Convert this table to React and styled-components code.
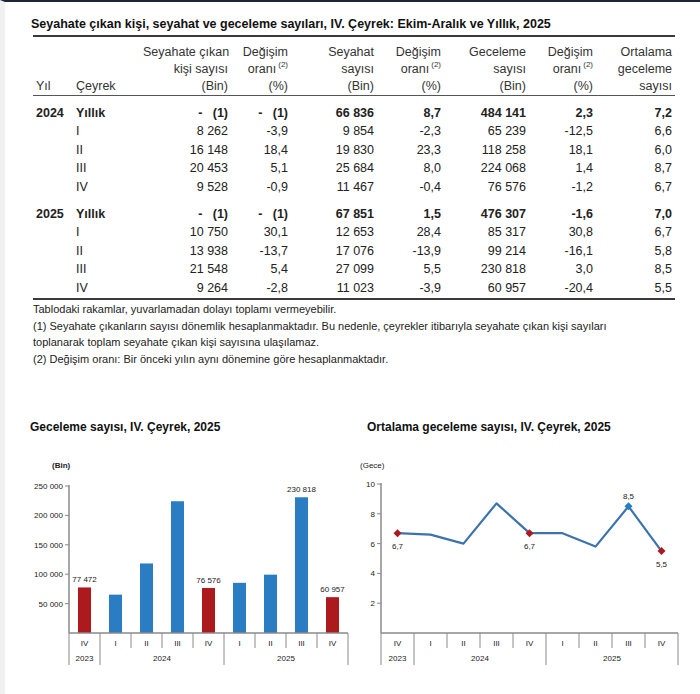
import React from 'react';
import styled, { createGlobalStyle } from 'styled-components';

const GlobalStyle = createGlobalStyle`
  html, body {
    margin: 0;
    padding: 0;
    background: #ffffff;
  }
  body {
    font-family: "Liberation Sans", Arial, sans-serif;
    color: #222;
  }
`;

const Page = styled.div`
  box-sizing: border-box;
  min-height: 694px;
  border-top: 2px solid #1e2536;
  border-left: 5px solid #f1f1f1;
  background: #fff;
`;

const Title = styled.h2`
  margin: 14px 0 0 26px;
  font-size: 12.5px;
  line-height: 16px;
  font-weight: bold;
  color: #111;
  white-space: nowrap;
`;

const Table = styled.table`
  margin: 3px 0 0 28px;
  width: 642px;
  table-layout: fixed;
  border-collapse: collapse;
  font-size: 12.5px;
`;

const HeadCell = styled.th`
  font-weight: normal;
  color: #333;
  text-align: ${(p) => p.$align || 'right'};
  vertical-align: bottom;
  line-height: 17px;
  padding: 7px 3px 0 3px;
  border-top: 2px solid #3a3a3a;
  border-bottom: 1px solid #555;
  white-space: nowrap;
`;

const Sup = styled.sup`
  font-size: 8px;
  line-height: 0;
  position: relative;
  top: -1px;
  margin-left: 2px;
`;

const Cell = styled.td`
  text-align: ${(p) => p.$align || 'right'};
  font-weight: ${(p) => (p.$bold ? 'bold' : 'normal')};
  color: #222;
  line-height: 18.4px;
  padding: ${(p) => p.$top}px 3px ${(p) => (p.$last ? 1 : 0)}px 3px;
  border-bottom: ${(p) => (p.$last ? '2px solid #3a3a3a' : 'none')};
  white-space: nowrap;
`;

const Notes = styled.div`
  margin-left: 28px;
  padding-top: 1px;
  font-size: 11px;
  line-height: 16.5px;
  color: #222;
  white-space: nowrap;
`;

const ChartsRow = styled.div`
  display: grid;
  grid-template-columns: 345px 350px;
  margin-top: 52px;
`;

const ChartPanel = styled.div`
  display: flex;
  flex-direction: column;
`;

const ChartTitle = styled.h3`
  margin: 0;
  padding-left: ${(p) => p.$indent}px;
  font-size: 12px;
  line-height: 16px;
  font-weight: bold;
  color: #111;
  white-space: nowrap;
`;

const ChartSvg = styled.svg`
  display: block;
  font-family: "Liberation Sans", Arial, sans-serif;
`;

const DASH = '-\u00a0\u00a0\u00a0(1)';

const groups = [
  {
    year: '2024',
    rows: [
      ['Yıllık', DASH, DASH, '66 836', '8,7', '484 141', '2,3', '7,2'],
      ['I', '8 262', '-3,9', '9 854', '-2,3', '65 239', '-12,5', '6,6'],
      ['II', '16 148', '18,4', '19 830', '23,3', '118 258', '18,1', '6,0'],
      ['III', '20 453', '5,1', '25 684', '8,0', '224 068', '1,4', '8,7'],
      ['IV', '9 528', '-0,9', '11 467', '-0,4', '76 576', '-1,2', '6,7'],
    ],
  },
  {
    year: '2025',
    rows: [
      ['Yıllık', DASH, DASH, '67 851', '1,5', '476 307', '-1,6', '7,0'],
      ['I', '10 750', '30,1', '12 653', '28,4', '85 317', '30,8', '6,7'],
      ['II', '13 938', '-13,7', '17 076', '-13,9', '99 214', '-16,1', '5,8'],
      ['III', '21 548', '5,4', '27 099', '5,5', '230 818', '3,0', '8,5'],
      ['IV', '9 264', '-2,8', '11 023', '-3,9', '60 957', '-20,4', '5,5'],
    ],
  },
];

const colWidths = [40, 67, 91, 60, 86, 67, 85, 67, 79];

const Change = () => (
  <>
    Değişim
    <br />
    oranı<Sup>(2)</Sup>
    <br />
    (%)
  </>
);

function DataTable() {
  return (
    <Table>
      <colgroup>
        {colWidths.map((w, i) => (
          <col key={i} style={{ width: w }} />
        ))}
      </colgroup>
      <thead>
        <tr>
          <HeadCell $align="left">Yıl</HeadCell>
          <HeadCell $align="left">Çeyrek</HeadCell>
          <HeadCell>
            Seyahate çıkan
            <br />
            kişi sayısı
            <br />
            (Bin)
          </HeadCell>
          <HeadCell>
            <Change />
          </HeadCell>
          <HeadCell>
            Seyahat
            <br />
            sayısı
            <br />
            (Bin)
          </HeadCell>
          <HeadCell>
            <Change />
          </HeadCell>
          <HeadCell>
            Geceleme
            <br />
            sayısı
            <br />
            (Bin)
          </HeadCell>
          <HeadCell>
            <Change />
          </HeadCell>
          <HeadCell>
            Ortalama
            <br />
            geceleme
            <br />
            sayısı
          </HeadCell>
        </tr>
      </thead>
      <tbody>
        {groups.map((g, gi) =>
          g.rows.map((r, ri) => {
            const bold = ri === 0;
            const top = ri === 0 ? (gi === 0 ? 8 : 9) : 0;
            const last = gi === groups.length - 1 && ri === g.rows.length - 1;
            return (
              <tr key={g.year + ri}>
                <Cell $align="left" $bold $top={top} $last={last}>
                  {ri === 0 ? g.year : ''}
                </Cell>
                {r.map((v, ci) => (
                  <Cell
                    key={ci}
                    $align={ci === 0 ? 'left' : 'right'}
                    $bold={bold}
                    $top={top}
                    $last={last}
                  >
                    {v}
                  </Cell>
                ))}
              </tr>
            );
          })
        )}
      </tbody>
    </Table>
  );
}

const ticks = ['IV', 'I', 'II', 'III', 'IV', 'I', 'II', 'III', 'IV'];
const AXIS = '#8a8a8a';
const BLUE = '#2a7cc3';
const RED = '#ad1a1e';
const LINE = '#3d73ad';
const BASE = 632;

function CategoryAxis({ x0, step }) {
  const yearBounds = [0, 1, 5, 9];
  const years = [
    { label: '2023', at: 0.5 },
    { label: '2024', at: 3 },
    { label: '2025', at: 7 },
  ];
  return (
    <g>
      <line x1={x0} y1={BASE} x2={x0 + step * 9} y2={BASE} stroke={AXIS} strokeWidth="1.5" />
      {Array.from({ length: 10 }, (_, k) => (
        <line
          key={k}
          x1={x0 + step * k}
          y1={BASE}
          x2={x0 + step * k}
          y2={yearBounds.includes(k) ? 664 : 647}
          stroke={AXIS}
          strokeWidth="1"
        />
      ))}
      {ticks.map((t, i) => (
        <text key={i} x={x0 + step * i + step / 2} y={645} fontSize="8" textAnchor="middle" fill="#222">
          {t}
        </text>
      ))}
      {years.map((y) => (
        <text key={y.label} x={x0 + step * y.at} y={660} fontSize="8" textAnchor="middle" fill="#222">
          {y.label}
        </text>
      ))}
    </g>
  );
}

const nights = [77472, 65239, 118258, 224068, 76576, 85317, 99214, 230818, 60957];
const labelled = { 0: '77 472', 4: '76 576', 7: '230 818', 8: '60 957' };

function BarChart() {
  const x0 = 69;
  const step = 31;
  const scale = 147 / 250000;
  const yTicks = [250000, 200000, 150000, 100000, 50000];
  return (
    <ChartSvg width="345" height="260" viewBox="5 434 345 260">
      <text x="52" y="467" fontSize="8" fontWeight="bold" fill="#222">(Bin)</text>
      <line x1={x0} y1={484} x2={x0} y2={BASE} stroke={AXIS} strokeWidth="1.5" />
      {yTicks.map((v) => {
        const y = BASE - v * scale;
        return (
          <g key={v}>
            <line x1={x0 - 4} y1={y} x2={x0} y2={y} stroke={AXIS} strokeWidth="1" />
            <text x={x0 - 6} y={y + 3} fontSize="8" textAnchor="end" fill="#222">
              {v.toLocaleString('fr-FR').replace(/\s/g, ' ')}
            </text>
          </g>
        );
      })}
      {nights.map((v, i) => {
        const h = v * scale;
        const cx = x0 + step * i + step / 2;
        const red = i === 0 || i === 4 || i === 8;
        return (
          <g key={i}>
            <rect x={cx - 6.5} y={BASE - h} width="13" height={h} fill={red ? RED : BLUE} />
            {labelled[i] && (
              <text x={cx} y={BASE - h - 5} fontSize="8" textAnchor="middle" fill="#222">
                {labelled[i]}
              </text>
            )}
          </g>
        );
      })}
      <CategoryAxis x0={x0} step={step} />
    </ChartSvg>
  );
}

const avg = [6.7, 6.6, 6.0, 8.7, 6.7, 6.7, 5.8, 8.5, 5.5];
const marks = {
  0: { color: RED, label: '6,7', dy: 16 },
  4: { color: RED, label: '6,7', dy: 16 },
  7: { color: BLUE, label: '8,5', dy: -7 },
  8: { color: RED, label: '5,5', dy: 16 },
};

function Diamond({ x, y, color }) {
  const r = 4;
  return <polygon points={`${x},${y - r} ${x + r},${y} ${x},${y + r} ${x - r},${y}`} fill={color} />;
}

function LineChart() {
  const x0 = 381;
  const step = 33;
  const scale = 14.9;
  const pts = avg.map((v, i) => [x0 + step * i + step / 2, BASE - v * scale]);
  return (
    <ChartSvg width="350" height="260" viewBox="350 434 350 260">
      <text x="360" y="467" fontSize="8" fill="#222">(Gece)</text>
      <line x1={x0} y1={482} x2={x0} y2={BASE} stroke={AXIS} strokeWidth="1.5" />
      {[10, 8, 6, 4, 2].map((v) => {
        const y = BASE - v * scale;
        return (
          <g key={v}>
            <line x1={x0 - 4} y1={y} x2={x0} y2={y} stroke={AXIS} strokeWidth="1" />
            <text x={x0 - 6} y={y + 3} fontSize="8" textAnchor="end" fill="#222">
              {v}
            </text>
          </g>
        );
      })}
      <polyline
        points={pts.map((p) => p.join(',')).join(' ')}
        fill="none"
        stroke={LINE}
        strokeWidth="2.2"
        strokeLinejoin="round"
      />
      {Object.entries(marks).map(([i, m]) => {
        const [x, y] = pts[i];
        return (
          <g key={i}>
            <Diamond x={x} y={y} color={m.color} />
            <text x={x} y={y + m.dy} fontSize="8" textAnchor="middle" fill="#222">
              {m.label}
            </text>
          </g>
        );
      })}
      <CategoryAxis x0={x0} step={step} />
    </ChartSvg>
  );
}

export default function App() {
  return (
    <>
      <GlobalStyle />
      <Page>
        <Title>Seyahate çıkan kişi, seyahat ve geceleme sayıları, IV. Çeyrek: Ekim-Aralık ve Yıllık, 2025</Title>
        <DataTable />
        <Notes>
          Tablodaki rakamlar, yuvarlamadan dolayı toplamı vermeyebilir.
          <br />
          (1) Seyahate çıkanların sayısı dönemlik hesaplanmaktadır. Bu nedenle, çeyrekler itibarıyla seyahate çıkan kişi sayıları
          <br />
          toplanarak toplam seyahate çıkan kişi sayısına ulaşılamaz.
          <br />
          (2) Değişim oranı: Bir önceki yılın aynı dönemine göre hesaplanmaktadır.
        </Notes>
        <ChartsRow>
          <ChartPanel>
            <ChartTitle $indent={25}>Geceleme sayısı, IV. Çeyrek, 2025</ChartTitle>
            <BarChart />
          </ChartPanel>
          <ChartPanel>
            <ChartTitle $indent={17}>Ortalama geceleme sayısı, IV. Çeyrek, 2025</ChartTitle>
            <LineChart />
          </ChartPanel>
        </ChartsRow>
      </Page>
    </>
  );
}
